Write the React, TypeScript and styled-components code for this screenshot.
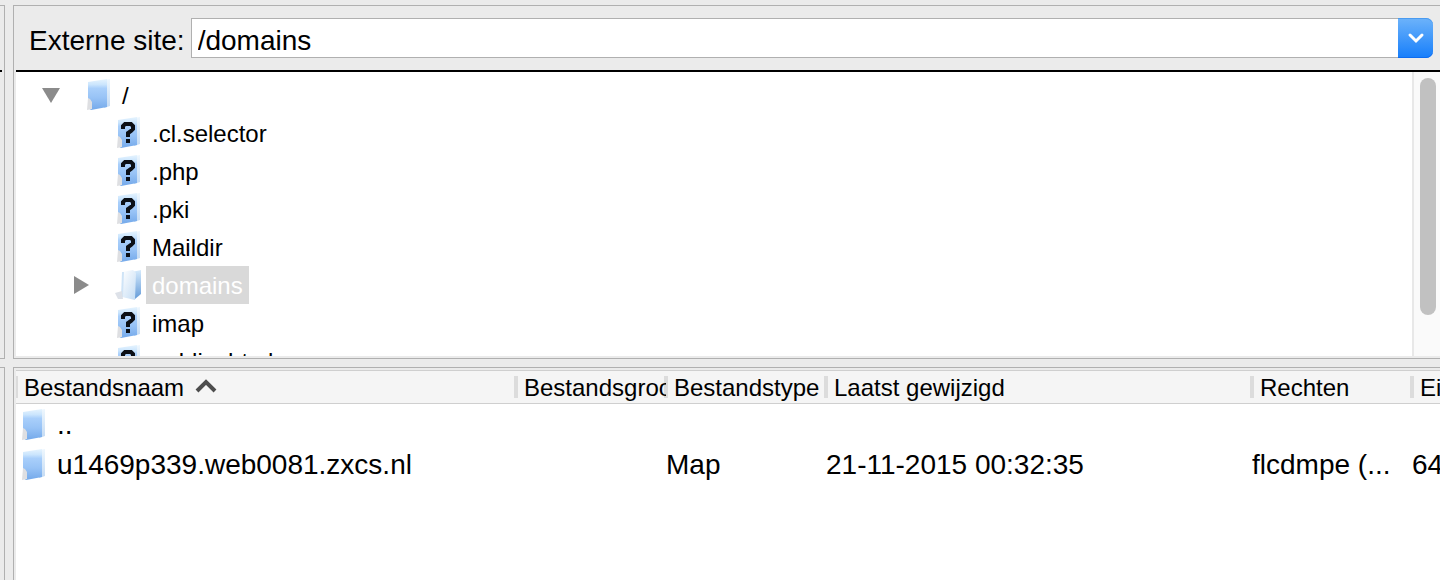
import React from "react";
import styled, { createGlobalStyle } from "styled-components";

const GlobalStyle = createGlobalStyle`
  * { box-sizing: border-box; }
  html, body, #root { height: 100%; }
  body {
    margin: 0;
    overflow: hidden;
    background: #ebebeb;
    color: #000;
    font-family: "Liberation Sans", "Helvetica Neue", Arial, sans-serif;
  }
  button, input { font: inherit; color: inherit; margin: 0; padding: 0; border: 0; }
`;

const Screen = styled.div`
  display: grid;
  grid-template-columns: 5px minmax(0, 1fr);
  column-gap: 8px;
  min-height: 100vh;
  padding-top: 5px;
`;

const Column = styled.div`
  display: grid;
  grid-template-rows: 354px minmax(0, 1fr);
  row-gap: 8px;
`;

const EdgePane = styled.div<{ $open?: boolean }>`
  border: 1px solid #b0b0b0;
  border-left: 0;
  border-bottom-width: ${(p) => (p.$open ? "0" : "1px")};
`;

const EdgeRule = styled.div`
  width: 2px;
  height: 2px;
  margin-top: 64px;
  background: #000;
`;

const Pane = styled.section<{ $open?: boolean }>`
  display: flex;
  flex-direction: column;
  min-width: 0;
  padding: 0 0 ${(p) => (p.$open ? "0" : "2px")} 2px;
  border: 1px solid #b0b0b0;
  border-right: 0;
  border-bottom-width: ${(p) => (p.$open ? "0" : "1px")};
`;

const PathBar = styled.div`
  display: flex;
  flex: none;
  align-items: center;
  gap: 6px;
  height: 66px;
  padding: 0 7px 0 13px;
  border-bottom: 2px solid #000;
  font-size: 28px;
`;

const PathLabel = styled.label`
  padding-top: 5px;
  line-height: 40px;
`;

const Combo = styled.div`
  display: flex;
  flex: 1;
  min-width: 0;
  height: 40px;
`;

const PathInput = styled.input`
  flex: 1;
  min-width: 0;
  border: 1px solid #b0b0b0;
  border-right: 0;
  background: #fff;
  outline: 0;
  && { padding: 6px 6px 0; }
`;

const ComboButton = styled.button`
  display: grid;
  place-items: center;
  width: 35px;
  border-radius: 0 7px 7px 0;
  background: linear-gradient(#6db3fa, #167efb);
  box-shadow: inset 0 1px #4a9bf0, inset 0 -1px #0d6cf0;
`;

const TreeArea = styled.div`
  display: flex;
  flex: 1;
  min-height: 0;
  overflow: hidden;
  background: #fff;
`;

const Tree = styled.ul`
  flex: 1;
  margin: 0;
  padding: 4px 0 0;
  list-style: none;
  font-size: 24px;
`;

const TreeRow = styled.li<{ $level: number }>`
  display: flex;
  align-items: center;
  height: 38px;
  padding-left: ${(p) => 26 + p.$level * 30}px;
`;

const Disclosure = styled.button`
  display: grid;
  place-items: center;
  width: 18px;
  height: 18px;
  background: none;
`;

const NoDisclosure = styled.span`
  width: 18px;
`;

const TreeIcon = styled.span`
  display: flex;
  margin: 0 4px 0 24px;
`;

const TreeLabel = styled.span<{ $selected?: boolean }>`
  height: 38px;
  padding: 1px 6px 0;
  line-height: 38px;
  color: ${(p) => (p.$selected ? "#fff" : "#000")};
  background: ${(p) => (p.$selected ? "#d9d9d9" : "transparent")};
`;

const ScrollTrack = styled.div`
  width: 28px;
  padding: 6px 4px 0 6px;
  border-left: 2px solid #e8e8e8;
  background: #fafafa;
`;

const ScrollThumb = styled.div`
  height: 237px;
  border-radius: 8px;
  background: #c1c1c1;
`;

const ListArea = styled.div`
  flex: 1;
  margin-top: 2px;
  overflow: hidden;
  background: #fff;
`;

const FileTable = styled.table`
  width: 100%;
  table-layout: fixed;
  border-collapse: separate;
  border-spacing: 0;
`;

const HeadCell = styled.th<{ $width?: number }>`
  width: ${(p) => (p.$width ? `${p.$width}px` : "auto")};
  height: 34px;
  padding: 2px 0 0 8px;
  overflow: hidden;
  border: solid #cfcfcf;
  border-width: 1px 0;
  background:
    linear-gradient(#dcdcdc, #dcdcdc) 0 5px / 2px 22px no-repeat,
    linear-gradient(#dcdcdc, #dcdcdc) 100% 5px / ${(p) => (p.$width ? 2 : 0)}px 22px no-repeat,
    #f5f5f5;
  font-size: 24px;
  font-weight: 400;
  line-height: 28px;
  text-align: left;
  white-space: nowrap;
`;

const SortMark = styled.svg`
  margin-left: 11px;
  vertical-align: 3px;
`;

const Cell = styled.td`
  height: 40px;
  padding: 2px 0 0;
  overflow: hidden;
  font-size: 28px;
  line-height: 38px;
  white-space: nowrap;
`;

const FileName = styled.span`
  display: flex;
  align-items: center;
  gap: 10px;
  padding-left: 3px;
`;

function FolderShape() {
  return (
    <>
      <defs>
        <linearGradient id="folderFace" x1="0" y1="0" x2="0" y2="1">
          <stop offset="0" stopColor="#e6f4fe" />
          <stop offset="0.18" stopColor="#cbe5fd" />
          <stop offset="0.3" stopColor="#a9cffb" />
          <stop offset="0.6" stopColor="#98c3f6" />
          <stop offset="1" stopColor="#74a9ea" />
        </linearGradient>
        <linearGradient id="folderEdge" x1="0" y1="0" x2="0" y2="1">
          <stop offset="0" stopColor="#eef7fe" />
          <stop offset="1" stopColor="#c3daf3" />
        </linearGradient>
      </defs>
      <path d="M20 1 L26 0 V27 L20 29 Z" fill="url(#folderEdge)" />
      <path d="M4 3 L23 0 V28 L7 31 L4 29 Z" fill="url(#folderFace)" />
      <path d="M4 19 L6 20 L8 23 V30 L3 31 Z" fill="#dedfe2" />
    </>
  );
}

function FolderIcon() {
  return (
    <svg width="28" height="32" viewBox="0 0 28 32" aria-hidden="true">
      <FolderShape />
    </svg>
  );
}

function UnknownFolderIcon() {
  return (
    <svg width="28" height="32" viewBox="0 0 28 32" aria-hidden="true">
      <FolderShape />
      <path
        d="M9 12 V9 L11 7 H17 L19 9 V12 L17 14 L14 16 V20"
        fill="none"
        stroke="#0b0f16"
        strokeWidth="4"
      />
      <path d="M12 22 H16 V26 H12 Z" fill="#0b0f16" />
    </svg>
  );
}

function OpenFolderIcon() {
  return (
    <svg width="28" height="32" viewBox="0 0 28 32" aria-hidden="true">
      <defs>
        <linearGradient id="openBack" x1="0" y1="0" x2="0" y2="1">
          <stop offset="0" stopColor="#d5eafc" />
          <stop offset="1" stopColor="#649bd8" />
        </linearGradient>
        <linearGradient id="openFace" x1="0" y1="0" x2="1" y2="1">
          <stop offset="0" stopColor="#ffffff" />
          <stop offset="1" stopColor="#c3dcf4" />
        </linearGradient>
      </defs>
      <path d="M18 3 L27 1 V25 L21 30 Z" fill="url(#openBack)" />
      <path d="M8 3 L19 1 L22 4 L21 31 L8 28 Z" fill="url(#openFace)" />
      <path d="M8 3 L10 3 L9 28 L7 28 Z" fill="#cfe4f7" />
      <path d="M1 24 L8 22 L9 30 L4 30 Z" fill="#dde1e8" />
    </svg>
  );
}

type Node = { name: string; level: number; kind: "folder" | "unknown" | "open"; arrow?: "down" | "right" };

const nodes: Node[] = [
  { name: "/", level: 0, kind: "folder", arrow: "down" },
  { name: ".cl.selector", level: 1, kind: "unknown" },
  { name: ".php", level: 1, kind: "unknown" },
  { name: ".pki", level: 1, kind: "unknown" },
  { name: "Maildir", level: 1, kind: "unknown" },
  { name: "domains", level: 1, kind: "open", arrow: "right" },
  { name: "imap", level: 1, kind: "unknown" },
  { name: "public_html", level: 1, kind: "unknown" },
];

const icons = { folder: FolderIcon, unknown: UnknownFolderIcon, open: OpenFolderIcon };

const files = [
  { name: "..", type: "", date: "", rights: "", owner: "" },
  { name: "u1469p339.web0081.zxcs.nl", type: "Map", date: "21-11-2015 00:32:35", rights: "flcdmpe (...", owner: "64" },
];

function TreeItem({ node }: { node: Node }) {
  const Icon = icons[node.kind];
  return (
    <TreeRow $level={node.level}>
      {node.arrow ? (
        <Disclosure type="button" aria-label={node.name} aria-expanded={node.arrow === "down"}>
          <svg width="18" height="18" viewBox="0 0 18 18" aria-hidden="true">
            <path d={node.arrow === "down" ? "M0 2 H18 L9 17 Z" : "M2 0 L17 9 L2 18 Z"} fill="#8b8b8b" />
          </svg>
        </Disclosure>
      ) : (
        <NoDisclosure />
      )}
      <TreeIcon>
        <Icon />
      </TreeIcon>
      <TreeLabel $selected={node.kind === "open"}>{node.name}</TreeLabel>
    </TreeRow>
  );
}

export default function App() {
  return (
    <>
      <GlobalStyle />
      <Screen>
        <Column>
          <EdgePane>
            <EdgeRule />
          </EdgePane>
          <EdgePane $open />
        </Column>
        <Column>
          <Pane>
            <PathBar>
              <PathLabel htmlFor="remote-path">Externe site:</PathLabel>
              <Combo>
                <PathInput id="remote-path" type="text" defaultValue="/domains" />
                <ComboButton type="button" aria-label="Externe site">
                  <svg width="18" height="12" viewBox="0 0 18 12" aria-hidden="true">
                    <path d="M3 3 L9 9 L15 3" fill="none" stroke="#fff" strokeWidth="3" strokeLinecap="round" />
                  </svg>
                </ComboButton>
              </Combo>
            </PathBar>
            <TreeArea>
              <Tree>
                {nodes.map((node) => (
                  <TreeItem key={node.name} node={node} />
                ))}
              </Tree>
              <ScrollTrack>
                <ScrollThumb />
              </ScrollTrack>
            </TreeArea>
          </Pane>
          <Pane $open>
            <ListArea>
              <FileTable>
                <thead>
                  <tr>
                    <HeadCell $width={500}>
                      Bestandsnaam
                      <SortMark width="22" height="14" viewBox="0 0 22 14" aria-hidden="true">
                        <path d="M2 12 L11 3 L20 12" fill="none" stroke="#4d4d4d" strokeWidth="4" />
                      </SortMark>
                    </HeadCell>
                    <HeadCell $width={150}>Bestandsgrootte</HeadCell>
                    <HeadCell $width={160}>Bestandstype</HeadCell>
                    <HeadCell $width={426}>Laatst gewijzigd</HeadCell>
                    <HeadCell $width={160}>Rechten</HeadCell>
                    <HeadCell>Ei</HeadCell>
                  </tr>
                </thead>
                <tbody>
                  {files.map((file) => (
                    <tr key={file.name}>
                      <Cell>
                        <FileName>
                          <FolderIcon />
                          {file.name}
                        </FileName>
                      </Cell>
                      <Cell />
                      <Cell>{file.type}</Cell>
                      <Cell>{file.date}</Cell>
                      <Cell>{file.rights}</Cell>
                      <Cell>{file.owner}</Cell>
                    </tr>
                  ))}
                </tbody>
              </FileTable>
            </ListArea>
          </Pane>
        </Column>
      </Screen>
    </>
  );
}
